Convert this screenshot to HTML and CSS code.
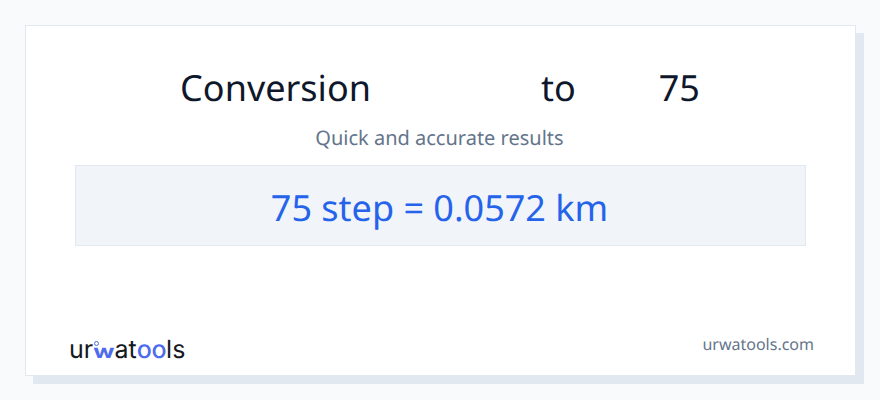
FILE: index.html
```html
<!DOCTYPE html>
<html lang="en">
<head>
    <meta charset="UTF-8">
    <title>Conversion to 75</title>
    <link rel="stylesheet" href="styles.css">
</head>
<body>
    <div class="card">
        <h1 class="title"><span>Conversion</span><span class="unit-to">to</span><span class="unit-value">75</span></h1>
        <p class="subtitle">Quick and accurate results</p>
        <div class="result">75 step = 0.0572 km</div>
        <div class="footer">
            <div class="logo">ur<span class="logo-w"><span class="logo-w-letter">w</span></span>at<span class="logo-o">oo</span>ls</div>
            <div class="site">urwatools.com</div>
        </div>
    </div>
</body>
</html>
```

FILE: styles.css
```css
body {
    font-family: "Noto Sans", sans-serif;
    text-rendering: geometricPrecision;
    background-color: #f8fafc;
    margin: 0;
    padding: 25px 24px 24px 25px;
}
.card {
    box-sizing: border-box;
    width: 831px;
    height: 351px;
    padding: 0 49px;
    background-color: #fff;
    border: 1px solid #e2e8f0;
    box-shadow: 8px 8px 0 #e2e8f0;
    display: flex;
    flex-direction: column;
}
.title {
    margin: 37px 0 0;
    padding-right: 1px;
    font-size: 36px;
    font-weight: 400;
    line-height: 49px;
    color: #0f172a;
    text-align: center;
}
.unit-to {
    margin-left: 170px;
}
.unit-value {
    margin-left: 83px;
}
.subtitle {
    margin: 12px 0 0;
    padding-right: 2px;
    font-size: 20px;
    line-height: 27px;
    color: #64748b;
    text-align: center;
}
.result {
    margin-top: 14px;
    height: 81px;
    box-sizing: border-box;
    padding-right: 2px;
    border: 1px solid #e2e8f0;
    background-color: #f1f5f9;
    color: #2563eb;
    font-size: 36px;
    line-height: 84px;
    text-align: center;
}
.footer {
    margin: auto -8px 0 -6px;
    padding-bottom: 11px;
    display: flex;
    justify-content: space-between;
    align-items: flex-start;
}
.logo {
    margin-top: 3px;
    font-family: "Inter", sans-serif;
    font-size: 25px;
    line-height: 28px;
    color: #16181d;
}
.logo-w {
    position: relative;
    display: inline-block;
    color: #4f6bed;
    font-weight: 700;
}
.logo-w-letter {
    display: inline-block;
    transform: scaleY(0.75);
    transform-origin: 50% 21px;
}
/* small ring over the w */
.logo-w::before {
    content: "";
    position: absolute;
    left: 1px;
    top: 5px;
    width: 3px;
    height: 3px;
    border: 1px solid #4f6bed;
    border-radius: 50%;
}
.logo-o {
    color: #4f6bed;
    font-weight: 500;
    letter-spacing: -0.4px;
}
.site {
    font-size: 16px;
    line-height: 22px;
    color: #64748b;
}
```
